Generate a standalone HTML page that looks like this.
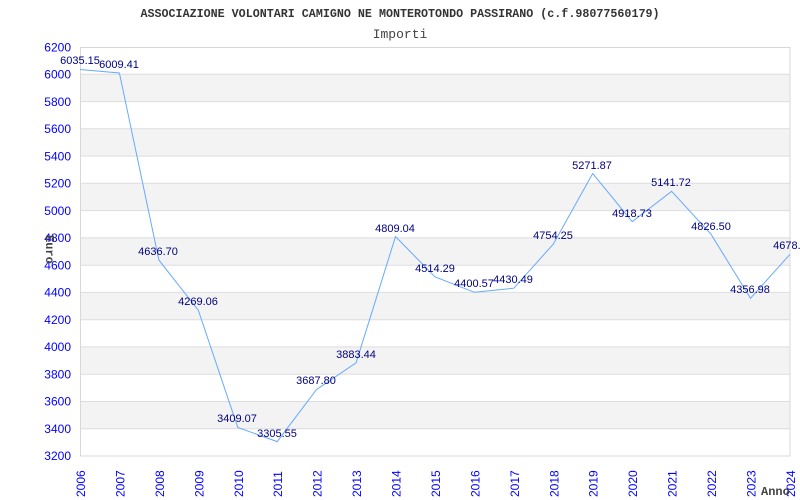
<!DOCTYPE html>
<html><head><meta charset="utf-8"><style>
html,body{margin:0;padding:0;background:#fff;width:800px;height:500px;overflow:hidden}
</style></head><body>
<svg width="800" height="500" xmlns="http://www.w3.org/2000/svg">
<rect width="800" height="500" fill="#fff"/>
<g fill="#f3f3f3">
<rect x="80" y="74.3" width="710" height="27.3"/>
<rect x="80" y="128.8" width="710" height="27.3"/>
<rect x="80" y="183.3" width="710" height="27.3"/>
<rect x="80" y="237.9" width="710" height="27.3"/>
<rect x="80" y="292.4" width="710" height="27.3"/>
<rect x="80" y="346.9" width="710" height="27.3"/>
<rect x="80" y="401.5" width="710" height="27.3"/>
</g>
<g stroke="#dddddd" stroke-width="1">
<line x1="80" x2="790" y1="74.3" y2="74.3"/><line x1="80" x2="790" y1="101.6" y2="101.6"/>
<line x1="80" x2="790" y1="128.8" y2="128.8"/><line x1="80" x2="790" y1="156.1" y2="156.1"/>
<line x1="80" x2="790" y1="183.3" y2="183.3"/><line x1="80" x2="790" y1="210.6" y2="210.6"/>
<line x1="80" x2="790" y1="237.9" y2="237.9"/><line x1="80" x2="790" y1="265.2" y2="265.2"/>
<line x1="80" x2="790" y1="292.4" y2="292.4"/><line x1="80" x2="790" y1="319.7" y2="319.7"/>
<line x1="80" x2="790" y1="346.9" y2="346.9"/><line x1="80" x2="790" y1="374.2" y2="374.2"/>
<line x1="80" x2="790" y1="401.5" y2="401.5"/><line x1="80" x2="790" y1="428.8" y2="428.8"/>
</g>
<rect x="80.5" y="47.5" width="709.5" height="408.5" fill="none" stroke="#d8d8d8"/>
<polyline fill="none" stroke="#66aaff" stroke-width="1" points="80,69.5 119.4,73 158.9,260.1 198.3,310.2 237.8,427.5 277.2,441.6 316.6,389.5 356.1,362.8 395.5,236.6 435,276.8 474.4,292.3 513.8,288.2 553.3,244.1 592.7,173.5 632.2,221.7 671.6,191.3 711,234.2 750.5,298.3 789.9,254.4"/>
<g font-family="Liberation Sans, sans-serif" font-size="11" fill="#000080" text-anchor="middle">
<text x="80" y="64">6035.15</text><text x="119" y="68">6009.41</text><text x="158" y="255">4636.70</text>
<text x="198" y="305">4269.06</text><text x="237" y="422">3409.07</text><text x="277" y="437">3305.55</text>
<text x="316" y="384">3687.80</text><text x="356" y="358">3883.44</text><text x="395" y="232">4809.04</text>
<text x="435" y="272">4514.29</text><text x="474" y="287">4400.57</text><text x="513" y="283">4430.49</text>
<text x="553" y="239">4754.25</text><text x="592" y="169">5271.87</text><text x="632" y="217">4918.73</text>
<text x="671" y="186">5141.72</text><text x="711" y="230">4826.50</text><text x="750" y="293">4356.98</text>
<text x="790" y="249">4678.8</text>
</g>
<g font-family="Liberation Sans, sans-serif" font-size="12" fill="#0000ff" text-anchor="end">
<text x="71" y="51.5">6200</text><text x="71" y="78.5">6000</text><text x="71" y="106">5800</text>
<text x="71" y="133">5600</text><text x="71" y="160.5">5400</text><text x="71" y="187.5">5200</text>
<text x="71" y="215">5000</text><text x="71" y="242">4800</text><text x="71" y="269.5">4600</text>
<text x="71" y="296.5">4400</text><text x="71" y="324">4200</text><text x="71" y="351">4000</text>
<text x="71" y="378.5">3800</text><text x="71" y="405.5">3600</text><text x="71" y="433">3400</text>
<text x="71" y="460">3200</text>
</g>
<g font-family="Liberation Sans, sans-serif" font-size="12" fill="#0000ff">
<text transform="translate(85,497) rotate(-90)">2006</text>
<text transform="translate(124.4,497) rotate(-90)">2007</text>
<text transform="translate(163.9,497) rotate(-90)">2008</text>
<text transform="translate(203.3,497) rotate(-90)">2009</text>
<text transform="translate(242.8,497) rotate(-90)">2010</text>
<text transform="translate(282.2,497) rotate(-90)">2011</text>
<text transform="translate(321.6,497) rotate(-90)">2012</text>
<text transform="translate(361.1,497) rotate(-90)">2013</text>
<text transform="translate(400.5,497) rotate(-90)">2014</text>
<text transform="translate(440,497) rotate(-90)">2015</text>
<text transform="translate(479.4,497) rotate(-90)">2016</text>
<text transform="translate(518.8,497) rotate(-90)">2017</text>
<text transform="translate(558.3,497) rotate(-90)">2018</text>
<text transform="translate(597.7,497) rotate(-90)">2019</text>
<text transform="translate(637.2,497) rotate(-90)">2020</text>
<text transform="translate(676.6,497) rotate(-90)">2021</text>
<text transform="translate(716,497) rotate(-90)">2022</text>
<text transform="translate(755.5,497) rotate(-90)">2023</text>
<text transform="translate(795,497) rotate(-90)">2024</text>
</g>
<text x="400" y="17" text-anchor="middle" font-family="Liberation Mono, monospace" font-size="11.7" font-weight="bold" fill="#333">ASSOCIAZIONE VOLONTARI CAMIGNO NE MONTEROTONDO PASSIRANO (c.f.98077560179)</text>
<text x="400" y="38" text-anchor="middle" font-family="Liberation Mono, monospace" font-size="13" fill="#444">Importi</text>
<text transform="translate(46,235) rotate(90)" font-family="Liberation Mono, monospace" font-size="12" font-weight="bold" fill="#444">Euro</text>
<text x="761" y="495" font-family="Liberation Mono, monospace" font-size="12" font-weight="bold" fill="#444">Anno</text>
</svg>
</body></html>
